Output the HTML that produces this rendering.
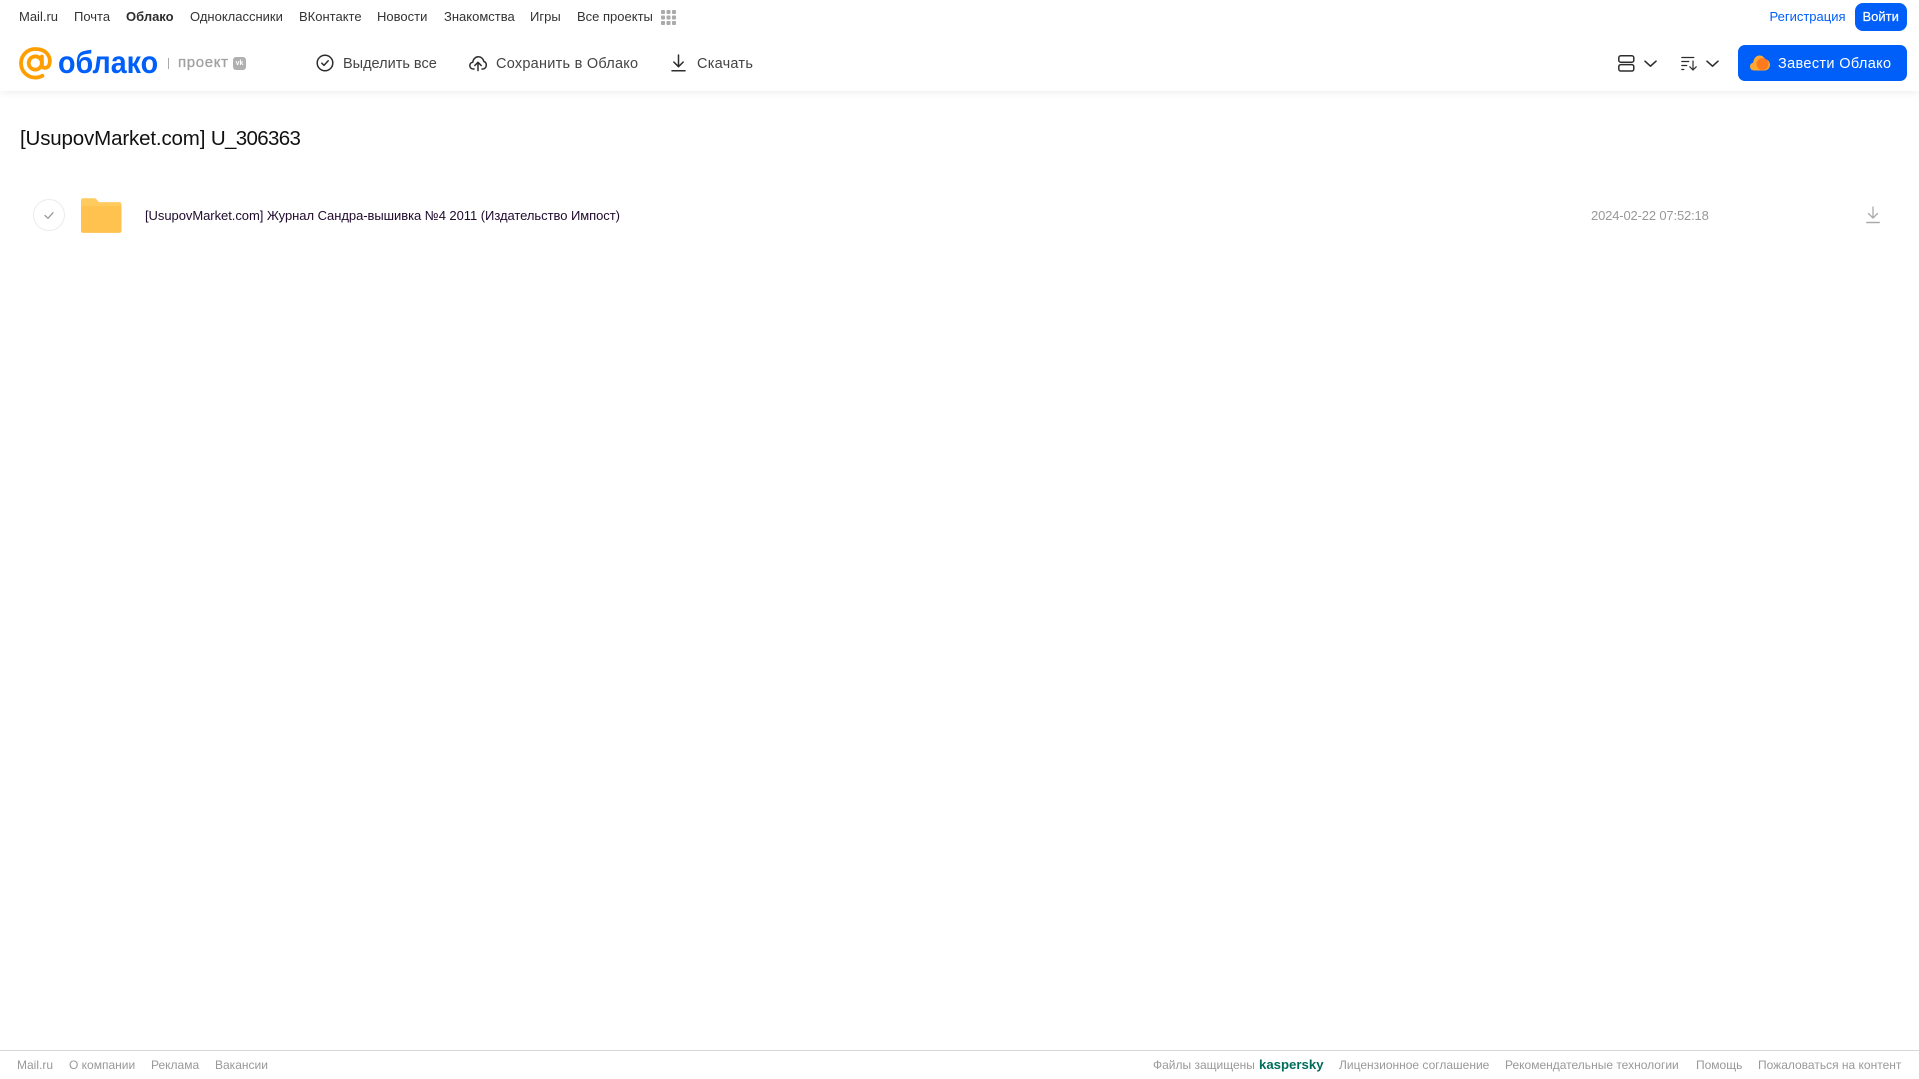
<!DOCTYPE html>
<html lang="ru"><head><meta charset="utf-8"><title>Облако</title>
<style>
html,body{margin:0;padding:0;background:#fff}
body{position:relative;width:1919px;height:1079px;overflow:hidden;font-family:"Liberation Sans",sans-serif}
.t{position:absolute;white-space:nowrap;line-height:20px;height:20px}
.n{top:7px;font-size:13px;color:#333}
.b{top:54px;font-size:14.5px;color:#444;letter-spacing:.25px}
.f{top:1055px;font-size:12px;color:#999}
svg{position:absolute;overflow:visible}
#hdr{position:absolute;left:0;top:0;width:1919px;height:91px;background:#fff;box-shadow:0 1px 8px rgba(0,0,0,.08)}
</style></head><body>
<div id="hdr"></div>
<span class="t n" style="left:19px">Mail.ru</span>
<span class="t n" style="left:74px">Почта</span>
<span class="t n" style="left:126px;font-weight:700;color:#2c2d2e">Облако</span>
<span class="t n" style="left:190px">Одноклассники</span>
<span class="t n" style="left:299px">ВКонтакте</span>
<span class="t n" style="left:377px">Новости</span>
<span class="t n" style="left:444px">Знакомства</span>
<span class="t n" style="left:530px">Игры</span>
<span class="t n" style="left:577px">Все проекты</span>
<svg style="left:661px;top:10px" width="15" height="15" fill="#aaa"><rect x="0" y="0" width="4" height="4" rx="1"/><rect x="5.5" y="0" width="4" height="4" rx="1"/><rect x="11" y="0" width="4" height="4" rx="1"/><rect x="0" y="5.5" width="4" height="4" rx="1"/><rect x="5.5" y="5.5" width="4" height="4" rx="1"/><rect x="11" y="5.5" width="4" height="4" rx="1"/><rect x="0" y="11" width="4" height="4" rx="1"/><rect x="5.5" y="11" width="4" height="4" rx="1"/><rect x="11" y="11" width="4" height="4" rx="1"/></svg>
<span class="t n" style="left:1769.5px;color:#005ff9">Регистрация</span>
<div style="position:absolute;left:1855px;top:3px;width:52px;height:28px;border-radius:8px;background:#005ff9"></div>
<span class="t n" style="left:1862.5px;color:#fff;-webkit-text-stroke:.2px #fff">Войти</span>

<svg style="left:18.500px;top:47px" width="33" height="33" viewBox="0 0 33 33" fill="none" stroke="#ff9e00" stroke-width="3.800" stroke-linecap="round"><circle cx="16.300" cy="16" r="6.600"/><path d="M22.900 9.500v8.600c0 3.600 5.600 3.800 7.300-.2 2.400-7.200-2-15.900-13.900-15.900C8.400 2 2 8.300 2 16.200 2 24.300 8.400 30.600 16.400 30.600c2.900 0 5-.6 7-1.800"/></svg>
<span class="t" style="left:57.500px;top:44px;height:36px;line-height:36px;font-size:31.500px;font-weight:700;color:#005ff9;transform:scaleX(.91);transform-origin:0 50%">облако</span>
<div style="position:absolute;left:168px;top:58px;width:1px;height:11px;background:#aaa"></div>
<span class="t" style="left:178px;top:53px;font-size:15px;color:#a0a0a0;letter-spacing:.65px;-webkit-text-stroke:.3px #a0a0a0">проект</span>
<div style="position:absolute;left:233px;top:57px;width:13px;height:13px;border-radius:3px;background:#b0b0b0;color:#fff;font-size:7px;font-weight:700;line-height:13px;text-align:center">vk</div>

<svg style="left:316px;top:54px" width="18" height="18" viewBox="0 0 18 18" fill="none" stroke="#2c2d2e" stroke-width="1.500" stroke-linecap="round" stroke-linejoin="round"><circle cx="9" cy="9" r="7.800"/><path d="M5.800 9.200l2.200 2.200 4.200-4.600"/></svg>
<span class="t b" style="left:343px;letter-spacing:0">Выделить все</span>
<svg style="left:469px;top:54px" width="18" height="18" viewBox="0 0 18 18" fill="none" stroke="#2c2d2e" stroke-width="1.500" stroke-linecap="round" stroke-linejoin="round"><path d="M5 15H4.200C2.200 15 .8 13.500.8 11.600c0-1.800 1.300-3.200 3-3.400C4.100 5 6.500 2.800 9.400 2.800c2.800 0 5 2 5.400 4.700 1.600.4 2.500 1.900 2.500 3.500 0 2.200-1.600 4-3.700 4H13"/><path d="M9 16.500V8.500M5.800 11.500L9 8.300l3.200 3.200"/></svg>
<span class="t b" style="left:496px">Сохранить в Облако</span>
<svg style="left:670px;top:54px" width="17" height="18" viewBox="0 0 17 18" fill="none" stroke="#2c2d2e" stroke-width="1.500" stroke-linecap="round" stroke-linejoin="round"><path d="M8.500 1v11.500M3.800 8l4.700 4.700L13.200 8M2 16.800h13"/></svg>
<span class="t b" style="left:697px">Скачать</span>

<svg style="left:1618px;top:55px" width="17" height="17" viewBox="0 0 17 17" fill="none" stroke="#2c2d2e" stroke-width="1.500"><rect x=".8" y=".8" width="15" height="6.400" rx="2"/><rect x=".8" y="9.600" width="15" height="6.400" rx="2"/></svg>
<svg style="left:1643.500px;top:60px" width="13" height="8" fill="none" stroke="#2c2d2e" stroke-width="1.600" stroke-linecap="round" stroke-linejoin="round"><path d="M1 1.200l5.500 5 5.500-5"/></svg>
<svg style="left:1681px;top:56px" width="17" height="15" viewBox="0 0 17 15" fill="none" stroke="#2c2d2e" stroke-width="1.200" stroke-linecap="round" stroke-linejoin="round"><path d="M.8 1.500h12M.8 5.500h7M.8 9.500h5M.8 13.500h2M12 5v9M8.800 10.800l3.200 3.200 3.200-3.200"/></svg>
<svg style="left:1705.500px;top:60px" width="13" height="8" fill="none" stroke="#2c2d2e" stroke-width="1.600" stroke-linecap="round" stroke-linejoin="round"><path d="M1 1.200l5.500 5 5.500-5"/></svg>

<div style="position:absolute;left:1738px;top:45px;width:169px;height:36px;border-radius:7px;background:#005ff9"></div>
<svg style="left:1750px;top:54px" width="20" height="18" viewBox="0 0 20 18"><path d="M4 16.500C1.800 16.500 0 14.700 0 12.500c0-2 1.400-3.500 3.200-3.900C3.600 4.700 6 1.500 9.500 1.500c2.600 0 4.600 1.500 5.500 3.700 2.800.2 5 2.600 5 5.500 0 3.200-2.500 5.800-5.700 5.800z" fill="#ffa930"/><circle cx="12.500" cy="10" r="6" fill="#ff7a1f"/></svg>
<span class="t b" style="left:1778px;color:#fff;letter-spacing:.35px">Завести Облако</span>

<span class="t" style="left:20px;top:126px;height:26px;line-height:26px;font-size:20.500px;color:#111;letter-spacing:-.15px">[UsupovMarket.com] <span style="letter-spacing:-.65px">U_306363</span></span>

<svg style="left:33px;top:199px" width="32" height="32" viewBox="0 0 32 32" fill="none"><circle cx="16" cy="16" r="15.500" stroke="#ececec"/><path d="M12 16.500l3 2.800 5-5.600" stroke="#999" stroke-width="1.300" stroke-linecap="round" stroke-linejoin="round"/></svg>
<svg style="left:81px;top:198px" width="40.500" height="35" viewBox="0 0 41 35"><path d="M2 0h11c1.500 0 2.400.6 3.300 1.700L18 4h21c1.100 0 2 .9 2 2v27c0 1.100-.9 2-2 2H2c-1.100 0-2-.9-2-2V2C0 .9.900 0 2 0z" fill="#ffcb5f"/><path d="M0 8h41v25c0 1.100-.9 2-2 2H2c-1.100 0-2-.9-2-2z" fill="#ffc24f"/></svg>
<span class="t" style="left:145px;top:206px;font-size:13px;color:#200a2e;letter-spacing:-.05px">[UsupovMarket.com] Журнал Сандра-вышивка №4 2011 (Издательство Импост)</span>
<span class="t" style="left:1591px;top:206px;font-size:13px;color:#999;letter-spacing:-.16px">2024-02-22 07:52:18</span>
<svg style="left:1866px;top:206px" width="14" height="18" viewBox="0 0 14 18" fill="none" stroke="#aaa" stroke-width="1.300" stroke-linecap="round" stroke-linejoin="round"><path d="M7 1v11M2.500 7.500L7 12l4.500-4.500"/><path d="M.8 16.500h12.400" stroke-width="1.500"/></svg>

<div style="position:absolute;left:0;top:1050px;width:1919px;height:1px;background:#d8d8d8"></div>
<span class="t f" style="left:17px">Mail.ru</span>
<span class="t f" style="left:69px">О компании</span>
<span class="t f" style="left:151px">Реклама</span>
<span class="t f" style="left:215px">Вакансии</span>
<span class="t f" style="left:1153px">Файлы защищены</span>
<span class="t f" style="left:1259px;color:#006d5c;font-weight:700;font-size:13.200px">kaspersky</span>
<span class="t f" style="left:1339px">Лицензионное соглашение</span>
<span class="t f" style="left:1505px">Рекомендательные технологии</span>
<span class="t f" style="left:1696px">Помощь</span>
<span class="t f" style="left:1758px">Пожаловаться на контент</span>
</body></html>
